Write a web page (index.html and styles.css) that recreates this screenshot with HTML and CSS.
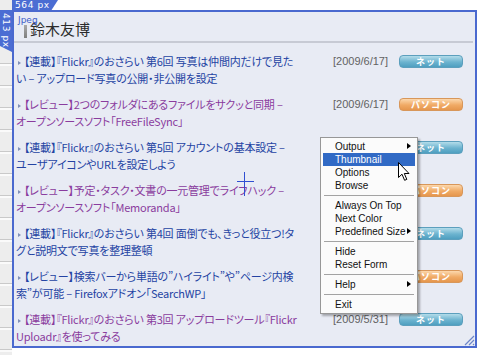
FILE: index.html
```html
<!DOCTYPE html>
<html lang="ja">
<head>
    <meta charset="UTF-8">
    <title>鈴木友博</title>
    <link rel="stylesheet" href="styles.css">
</head>
<body>
    <div class="screen">
        <div class="frame">
            <span class="fmt">Jpeg</span>
            <h1 class="title">鈴木友博</h1>

            <ul class="posts">
                <li class="post">
                    <a class="post-link">【連載】『Flickr』のおさらい 第6回 写真は仲間内だけで見た<br>い – アップロード写真の公開・非公開を設定</a>
                    <span class="date">[2009/6/17]</span>
                    <span class="tag tag-net">ネット</span>
                </li>
                <li class="post">
                    <a class="post-link visited">【レビュー】2つのフォルダにあるファイルをサクッと同期 –<br>オープンソースソフト「FreeFileSync」</a>
                    <span class="date">[2009/6/17]</span>
                    <span class="tag tag-pc">パソコン</span>
                </li>
                <li class="post">
                    <a class="post-link">【連載】『Flickr』のおさらい 第5回 アカウントの基本設定 –<br>ユーザアイコンやURLを設定しよう</a>
                    <span class="date">[2009/6/17]</span>
                    <span class="tag tag-net">ネット</span>
                </li>
                <li class="post">
                    <a class="post-link visited">【レビュー】予定・タスク・文書の一元管理でライフハック –<br>オープンソースソフト「Memoranda」</a>
                    <span class="date">[2009/6/17]</span>
                    <span class="tag tag-pc">パソコン</span>
                </li>
                <li class="post">
                    <a class="post-link">【連載】『Flickr』のおさらい 第4回 面倒でも、きっと役立つ!タ<br>グと説明文で写真を整理整頓</a>
                    <span class="date">[2009/6/10]</span>
                    <span class="tag tag-net">ネット</span>
                </li>
                <li class="post">
                    <a class="post-link">【レビュー】検索バーから単語の”ハイライト”や”ページ内検<br>索”が可能 – Firefoxアドオン「SearchWP」</a>
                    <span class="date">[2009/6/10]</span>
                    <span class="tag tag-pc">パソコン</span>
                </li>
                <li class="post">
                    <a class="post-link visited">【連載】『Flickr』のおさらい 第3回 アップロードツール『Flickr<br>Uploadr』を使ってみる</a>
                    <span class="date">[2009/5/31]</span>
                    <span class="tag tag-net">ネット</span>
                </li>
            </ul>

            <svg class="grip" width="12" height="12" viewBox="0 0 12 12">
                <path d="M11 2 L2 11 M11 6 L6 11 M11 10 L10 11" stroke="#6c85c8" stroke-width="1.2"/>
            </svg>
        </div>

        <div class="size size-w">564 px</div>
        <div class="size size-h"><span>413 px</span></div>

        <div class="cross"></div>

        <ul class="menu">
            <li class="has-sub">Output</li>
            <li class="active">Thumbnail</li>
            <li>Options</li>
            <li>Browse</li>
            <li class="sep"></li>
            <li>Always On Top</li>
            <li>Next Color</li>
            <li class="has-sub">Predefined Size</li>
            <li class="sep"></li>
            <li>Hide</li>
            <li>Reset Form</li>
            <li class="sep"></li>
            <li class="has-sub">Help</li>
            <li class="sep"></li>
            <li>Exit</li>
        </ul>

        <svg class="cursor" width="13" height="20" viewBox="0 0 13 20">
            <path d="M0.5 0.5 L0.5 15.5 L4 12.2 L6.6 18.3 L8.8 17.4 L6.3 11.5 L11 11.5 Z" fill="#fff" stroke="#000" stroke-width="1"/>
        </svg>
    </div>
</body>
</html>
```

FILE: styles.css
```css
* {
    box-sizing: border-box;
}

body {
    margin: 0;
    background: #fff;
    font-family: "Noto Sans CJK JP", "Noto Sans", sans-serif;
}

.screen {
    position: relative;
    width: 480px;
    height: 355px;
    overflow: hidden;
    padding: 10px 3px 7px 12px;
    background-color: #fff;
    /* page behind the frame, left edge */
    background-image: repeating-linear-gradient(#ededed 0 19px, #c9c9c9 19px 20px, #fafafa 20px 22px);
    background-size: 12px 100%;
    background-repeat: no-repeat;
}

.frame {
    position: relative;
    height: 100%;
    border: 2px solid #4a69cf;
    background: #e8ebf4;
    overflow: hidden;
}

.fmt {
    position: absolute;
    left: 4px;
    top: 3px;
    font-family: "DejaVu Sans", sans-serif;
    font-size: 9px;
    line-height: 10px;
    color: #3d5cc8;
}

.title {
    margin: 0 2px 0 0;
    padding: 7px 0 2px 10px;
    font-size: 15px;
    line-height: 20px;
    font-weight: normal;
    color: #2b2b2b;
    border-bottom: 2px solid #c7cad4;
    display: flex;
    align-items: center;
}

.title::before {
    content: "";
    width: 3px;
    height: 13px;
    margin: 4px 3px 0 0;
    background: linear-gradient(#a9a9a9, #7f7f7f);
}

.posts {
    list-style: none;
    margin: 0;
    padding: 10px 12px 0 2px;
}

.post {
    display: flex;
    align-items: flex-start;
    margin-bottom: 9px;
    font-size: 11px;
    line-height: 17px;
}

.post-link {
    flex: 1;
    min-width: 0;
    white-space: nowrap;
    color: #2443a3;
    font-feature-settings: "palt";
    letter-spacing: -0.2px;
}

.post-link::before {
    content: "";
    display: inline-block;
    border-left: 3px solid #8090b8;
    border-top: 2.5px solid transparent;
    border-bottom: 2.5px solid transparent;
    margin: 0 3px 1px 2px;
}

.post-link.visited {
    color: #8a3c9e;
}

.date {
    width: 58px;
    margin-right: 8px;
    font-family: "Liberation Sans", sans-serif;
    font-size: 11px;
    color: #626262;
}

.tag {
    width: 64px;
    height: 13px;
    margin-top: 2px;
    border-radius: 4px;
    font-size: 9px;
    line-height: 11px;
    font-weight: bold;
    letter-spacing: 1px;
    text-align: center;
    color: #fff;
}

.tag-net {
    border: 1px solid #5c9fbd;
    background: linear-gradient(#b3dcea, #6cb3cf 55%, #4f9fc0);
}

.tag-pc {
    border: 1px solid #d8975a;
    background: linear-gradient(#fcd8ad, #f0aa65 55%, #e5964d);
}

.grip {
    position: absolute;
    right: 0;
    bottom: 0;
}

/* size labels of the capture frame */
.size {
    position: absolute;
    background: #4b6dd3;
    color: #fff;
    font-family: "DejaVu Sans", sans-serif;
    font-size: 9px;
    letter-spacing: 0.6px;
}

.size-w {
    left: 12px;
    top: 0;
    width: 46px;
    height: 10px;
    line-height: 10px;
    padding-left: 3px;
    clip-path: polygon(0 0, 100% 0, 86% 100%, 0 100%);
}

.size-h {
    left: 0;
    top: 10px;
    width: 12px;
    height: 42px;
    padding-top: 3px;
    clip-path: polygon(0 0, 100% 0, 100% 100%, 0 86%);
}

.size-h span {
    display: block;
    writing-mode: vertical-rl;
    line-height: 12px;
}

.cross {
    position: absolute;
    left: 237px;
    top: 172px;
    width: 17px;
    height: 24px;
}

.cross::before,
.cross::after {
    content: "";
    position: absolute;
    background: #2f4fd2;
}

.cross::before {
    left: 0;
    top: 9px;
    width: 17px;
    height: 1px;
}

.cross::after {
    left: 7px;
    top: 0;
    width: 1px;
    height: 24px;
}

/* context menu */
.menu {
    position: absolute;
    left: 320px;
    top: 137px;
    width: 98px;
    margin: 0;
    padding: 2px 2px;
    list-style: none;
    background: #fbfbfb;
    border: 1px solid #979797;
    box-shadow: 2px 2px 2px rgba(0, 0, 0, 0.3);
    font-family: "Liberation Sans", sans-serif;
    font-size: 10px;
    color: #111;
}

.menu li {
    position: relative;
    height: 13px;
    line-height: 13px;
    padding-left: 12px;
}

.menu li.active {
    background: #316ac5;
    color: #fff;
}

.menu li.has-sub::after {
    content: "";
    position: absolute;
    right: 4px;
    top: 3px;
    border-left: 4px solid #000;
    border-top: 3.5px solid transparent;
    border-bottom: 3.5px solid transparent;
}

.menu li.sep {
    height: 7px;
    padding: 0;
    margin: 0 1px;
    background: linear-gradient(transparent 3px, #a3a3a3 3px 4px, transparent 4px);
}

.cursor {
    position: absolute;
    left: 398px;
    top: 162px;
}
```
